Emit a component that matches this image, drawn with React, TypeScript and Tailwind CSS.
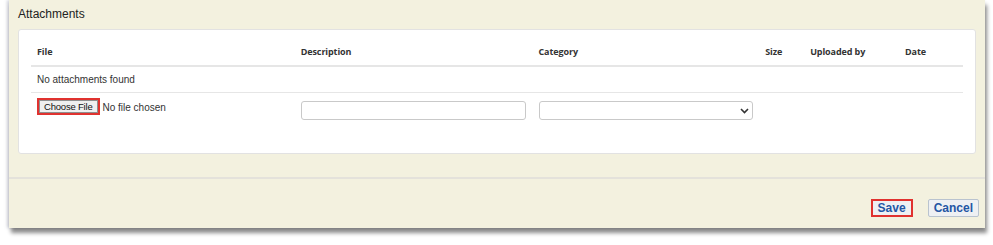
import React from "react";

const columns = [
  { label: "File", width: "w-[264px]" },
  { label: "Description", width: "w-[238px]" },
  { label: "Category", width: "w-[227px]" },
  { label: "Size", width: "w-[45px]" },
  { label: "Uploaded by", width: "w-[95px]" },
  { label: "Date", width: "w-[64px]" },
];

export default function App() {
  return (
    <div className="w-[993px] h-[245px] bg-white font-['Liberation_Sans',Arial,sans-serif]">
      <div className="ml-[9px] w-[976px] h-[228px] bg-[#f3f1df] shadow-[2px_5px_4px_rgba(0,0,0,0.45),-2px_0_3px_rgba(120,125,150,0.35)] flex flex-col">
        <div className="px-[9px] pt-[5px] h-[29px] text-[12px] text-[#222]">Attachments</div>
        <div className="mx-[9px] h-[125px] bg-white border border-[#e2e2e2] rounded-[3px] px-[12px] pt-[9px]">
          {/* header */}
          <div className="flex h-[28px] items-center border-b-2 border-[#e6e6e6] text-[9px] font-bold text-[#333] font-['Open_Sans',sans-serif] tracking-[-0.1px]">
            {columns.map((c) => (
              <div key={c.label} className={`${c.width} px-[6px]`}>
                {c.label}
              </div>
            ))}
          </div>
          <div className="flex h-[26px] items-center border-b border-[#e6e6e6] px-[6px] text-[10px] text-[#333]">
            No attachments found
          </div>
          <div className="flex pt-[5px]">
            <div className="w-[264px] px-[6px] flex items-start gap-[3px] text-[10px] text-[#333]">
              <span className="border-2 border-[#e0322f] h-[17px] flex">
                <span className="bg-[#efefef] border border-[#8f8f8f] px-[4px] text-[9.5px] text-[#111] leading-[11px] tracking-[-0.2px] flex items-center">
                  Choose File
                </span>
              </span>
              <span className="mt-[2px]">No file chosen</span>
            </div>
            <div className="w-[238px] px-[6px] pt-[3px]">
              <div className="w-[225px] h-[19px] border border-[#c9c9c9] rounded-[3px]" />
            </div>
            <div className="w-[227px] px-[6px] pt-[3px]">
              <div className="w-[214px] h-[19px] border border-[#c9c9c9] rounded-[3px] flex items-center justify-end pr-[3px]">
                <svg width="9" height="6" viewBox="0 0 9 6" fill="none">
                  <path d="M1 1l3.5 3.5L8 1" stroke="#333" strokeWidth="1.6" />
                </svg>
              </div>
            </div>
          </div>
        </div>
        <div className="mt-[23px] border-t-2 border-[#e4e2db] flex-1 flex items-start justify-end pr-[6px] pt-[20px] gap-[15px]">
          <button className="h-[18px] border-2 border-[#e0322f] bg-[#eef0f3] px-[5px] text-[12px] font-bold text-[#2456a4] leading-[12px]">
            Save
          </button>
          <button className="h-[18px] border border-[#b9c3cf] rounded-[2px] bg-[#eef0f3] px-[5px] text-[12px] font-bold text-[#2456a4] leading-[12px]">
            Cancel
          </button>
        </div>
      </div>
    </div>
  );
}
